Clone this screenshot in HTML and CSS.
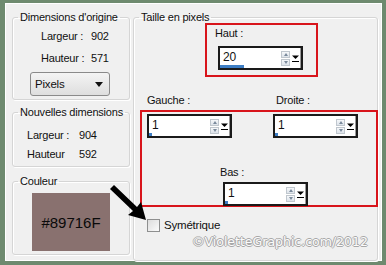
FILE: index.html
```html
<!DOCTYPE html>
<html lang="fr">

<head>
    <meta charset="UTF-8">
    <meta name="viewport" content="width=device-width, initial-scale=1.0">
    <title>Ajouter des bordures</title>
    <link rel="stylesheet" href="styles.css">
</head>

<body>
    <div class="frame">
        <div class="panel">
            <div class="left-col">
                <fieldset class="group g-orig">
                    <legend>Dimensions d'origine</legend>
                    <div class="dim-row first"><span class="dim-label">Largeur :</span><span>902</span></div>
                    <div class="dim-row"><span class="dim-label">Hauteur :</span><span>571</span></div>
                    <div class="combo">
                        <span>Pixels</span>
                        <svg width="8" height="5" viewBox="0 0 8 5"><path d="M0 0h8L4 5z" fill="#111"/></svg>
                    </div>
                </fieldset>

                <fieldset class="group g-new">
                    <legend>Nouvelles dimensions</legend>
                    <div class="dim-row first"><span class="dim-label">Largeur :</span><span>904</span></div>
                    <div class="dim-row"><span class="dim-label">Hauteur</span><span>592</span></div>
                </fieldset>

                <fieldset class="group g-color">
                    <legend>Couleur</legend>
                    <div class="swatch">#89716F</div>
                </fieldset>
            </div>

            <fieldset class="group g-size">
                <legend>Taille en pixels</legend>

                <div class="red-box haut-box">
                    <div class="field-label">Haut :</div>
                    <div class="spin haut-spin">
                        <span class="spin-value">20</span>
                        <span class="spin-btns"><i class="up"></i><i class="down"></i></span>
                        <span class="spin-drop"><svg width="7" height="8" viewBox="0 0 7 8"><path d="M0 1.5h7L3.5 5z" fill="#000"/><path d="M0 7.5h7" stroke="#000"/></svg></span>
                        <span class="spin-bar" style="width: 24px"></span>
                    </div>
                </div>

                <div class="side-labels">
                    <span class="field-label">Gauche :</span>
                    <span class="field-label droite">Droite :</span>
                </div>

                <div class="red-box sides-box">
                    <div class="spin-row">
                        <div class="spin">
                            <span class="spin-value">1</span>
                            <span class="spin-btns"><i class="up"></i><i class="down"></i></span>
                            <span class="spin-drop"><svg width="7" height="8" viewBox="0 0 7 8"><path d="M0 1.5h7L3.5 5z" fill="#000"/><path d="M0 7.5h7" stroke="#000"/></svg></span>
                            <span class="spin-bar" style="width: 3px"></span>
                        </div>
                        <div class="spin">
                            <span class="spin-value">1</span>
                            <span class="spin-btns"><i class="up"></i><i class="down"></i></span>
                            <span class="spin-drop"><svg width="7" height="8" viewBox="0 0 7 8"><path d="M0 1.5h7L3.5 5z" fill="#000"/><path d="M0 7.5h7" stroke="#000"/></svg></span>
                            <span class="spin-bar" style="width: 3px"></span>
                        </div>
                    </div>
                    <div class="field-label bas-label">Bas :</div>
                    <div class="spin bas-spin">
                        <span class="spin-value">1</span>
                        <span class="spin-btns"><i class="up"></i><i class="down"></i></span>
                        <span class="spin-drop"><svg width="7" height="8" viewBox="0 0 7 8"><path d="M0 1.5h7L3.5 5z" fill="#000"/><path d="M0 7.5h7" stroke="#000"/></svg></span>
                        <span class="spin-bar" style="width: 3px"></span>
                    </div>
                </div>

                <label class="check"><span class="box"></span>Symétrique</label>

                <div class="mark">©VioletteGraphic.com/2012</div>
            </fieldset>
        </div>

        <svg class="arrow" width="386" height="265" viewBox="0 0 386 265">
            <polygon points="114,185 137,207 141,202 146,220 128,215 133,211 110,189" fill="#000"/>
        </svg>
    </div>
</body>

</html>
```

FILE: styles.css
```css
body {
    margin: 0;
    font-family: "Liberation Sans", Arial, sans-serif;
    font-size: 11px;
    letter-spacing: -0.2px;
    color: #111;
}

.frame {
    position: relative;
    width: 386px;
    height: 265px;
    box-sizing: border-box;
    border-style: solid;
    border-color: #6e8a6f;
    border-width: 3px 4px 4px 5px;
    background: #6e8a6f;
}

.panel {
    display: flex;
    height: 100%;
    box-sizing: border-box;
    padding: 7px 4px 0 7px;
    gap: 3px;
    background: #f0f0f0;
    box-shadow: inset 1px 1px 0 #fff, inset -1px -1px 0 #fff;
}

/* group boxes */
.group {
    margin: 0;
    padding: 0;
    border: 1px solid #d5d5d5;
    border-radius: 3px;
    box-shadow: inset 1px 1px 0 #fff, 1px 1px 0 #fff;
    min-width: 0;
}

.group legend {
    margin-left: 5px;
    padding: 0 2px;
    line-height: 14px;
}

.left-col {
    display: flex;
    flex-direction: column;
    width: 118px;
}

.g-orig {
    padding: 0 0 3px 0;
}

.g-new {
    margin-top: 5px;
    padding-bottom: 5px;
}

.g-color {
    margin-top: 7px;
    padding-bottom: 3px;
}

.dim-row {
    display: flex;
    line-height: 14px;
    margin-top: 8px;
}

.g-orig .dim-row {
    padding-left: 28px;
}

.g-orig .dim-row.first {
    margin-top: 5px;
}

.g-orig .dim-label {
    width: 50px;
}

.g-new .dim-row {
    padding-left: 14px;
    margin-top: 5px;
}

.g-new .dim-row.first {
    margin-top: 9px;
}

.g-new .dim-label {
    width: 52px;
}

.combo {
    display: flex;
    align-items: center;
    justify-content: space-between;
    width: 80px;
    height: 24px;
    box-sizing: border-box;
    margin: 7px 0 0 17px;
    padding: 0 6px 0 4px;
    border: 1px solid #8a8a8a;
    border-radius: 3px;
    background: linear-gradient(#f4f4f4, #dedede);
    font-size: 11.5px;
}

.swatch {
    width: 78px;
    height: 58px;
    margin: 5px 0 0 19px;
    background: #89716f;
    display: flex;
    align-items: center;
    justify-content: center;
    font-size: 15px;
    letter-spacing: 0;
    color: #0a0a0a;
}

/* right group */
.g-size {
    flex: 1;
    padding: 0 0 5px 0;
}

.field-label {
    line-height: 14px;
}

.red-box {
    border: 2px solid #d8141b;
}

.haut-box {
    width: 113px;
    height: 54px;
    box-sizing: border-box;
    margin: -1px 0 0 71px;
    padding: 1px 0 0 8px;
}

.haut-box .spin {
    margin: 6px 0 0 3px;
}

.side-labels {
    display: flex;
    margin: 16px 0 0 13px;
}

.side-labels .droite {
    margin-left: 86px;
}

.sides-box {
    width: 238px;
    height: 97px;
    box-sizing: border-box;
    margin: 3px 0 0 6px;
    padding: 2px 0 0 5px;
}

.spin-row {
    display: flex;
    gap: 41px;
}

.bas-label {
    margin: 27px 0 0 73px;
}

.bas-spin {
    margin: 3px 0 0 76px;
}

/* spinner control */
.spin {
    position: relative;
    display: flex;
    align-items: center;
    width: 85px;
    height: 24px;
    box-sizing: border-box;
    border: 2px solid #1a1a1a;
    background: #fff;
}

.spin-value {
    flex: 1;
    padding: 0 0 2px 3px;
    font-size: 12px;
}

.spin-btns {
    display: flex;
    flex-direction: column;
    gap: 1px;
    width: 9px;
}

.spin-btns i {
    position: relative;
    height: 7px;
    box-sizing: border-box;
    border: 1px solid #c0c7ce;
    background: linear-gradient(#f6f8fa, #dde3ea);
}

.spin-btns i::after {
    content: "";
    position: absolute;
    left: 1.5px;
    border-left: 2.5px solid transparent;
    border-right: 2.5px solid transparent;
}

.spin-btns .up::after {
    top: 1px;
    border-bottom: 3px solid #7a8a9c;
}

.spin-btns .down::after {
    top: 1px;
    border-top: 3px solid #7a8a9c;
}

.spin-drop {
    display: flex;
    align-items: center;
    justify-content: center;
    width: 10px;
    height: 100%;
    margin-left: 1px;
    border-right: 1px solid #9a9a9a;
    box-sizing: border-box;
}

.spin-bar {
    position: absolute;
    left: 0;
    bottom: 0;
    height: 3px;
    background: #3c7dc4;
}

/* checkbox */
.check {
    display: flex;
    align-items: center;
    gap: 4px;
    margin: 11px 0 0 13px;
    font-size: 11.5px;
    line-height: 14px;
}

.check .box {
    width: 13px;
    height: 13px;
    box-sizing: border-box;
    border: 1px solid #8e8f8f;
    background: linear-gradient(135deg, #dcdcdc, #fbfbfb);
}

.mark {
    margin: 3px 0 0 58px;
    font-family: "DejaVu Sans", Verdana, sans-serif;
    font-size: 12.5px;
    letter-spacing: 0;
    line-height: 14px;
    color: #fbfbfb;
    text-shadow: 1px 0 0 #a8a8a8, -1px 0 0 #a8a8a8, 0 1px 0 #a8a8a8, 0 -1px 0 #a8a8a8;
}

/* pointer arrow over the panel */
.arrow {
    position: absolute;
    left: -5px;
    top: -3px;
}
```
